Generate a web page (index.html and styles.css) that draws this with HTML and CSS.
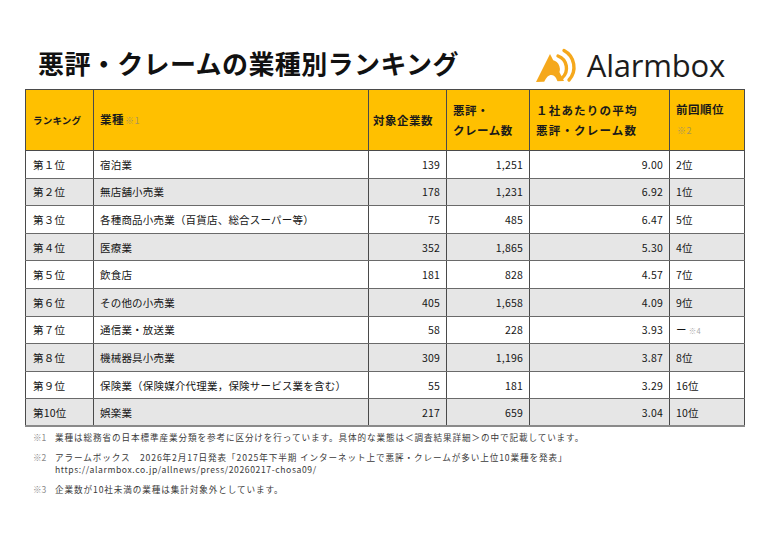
FILE: index.html
```html
<!DOCTYPE html>
<html lang="ja">
<head>
<meta charset="utf-8">
<title>悪評・クレームの業種別ランキング</title>
<link rel="stylesheet" href="styles.css">
</head>
<body>
<div class="page">
  <header class="top">
    <h1 class="title">悪評・クレームの業種別ランキング</h1>
    <div class="logo">
      <svg class="logo-icon" width="44" height="36" viewBox="0 0 44 36" aria-hidden="true">
        <path d="M15 6 L29 33 L1 34 Z" fill="#F5A81C"/>
        <path d="M9 34.5 C12 26 18 25 21 30 L23 34.5 Z" fill="#fff"/>
        <path d="M17 14 A7 7 0 0 1 21 26" fill="none" stroke="#F5A81C" stroke-width="3.4" stroke-linecap="round"/>
        <path d="M23 8 A13 13 0 0 1 27 30" fill="none" stroke="#F5A81C" stroke-width="3.4" stroke-linecap="round"/>
        <path d="M29 2.5 A19 19 0 0 1 34 32" fill="none" stroke="#F5A81C" stroke-width="3.4" stroke-linecap="round"/>
      </svg>
      <span class="logo-text">Alarmbox</span>
    </div>
  </header>

  <table class="rank">
    <colgroup>
      <col class="c-rank"><col class="c-ind"><col class="c-cnt"><col class="c-rev"><col class="c-avg"><col class="c-prev">
    </colgroup>
    <thead>
      <tr>
        <th class="h-rank">ランキング</th>
        <th>業種<span class="note">※1</span></th>
        <th class="h-cnt">対象企業数</th>
        <th>悪評・<br>クレーム数</th>
        <th class="h-avg">１社あたりの平均<br>悪評・クレーム数</th>
        <th>前回順位<br><span class="note">※2</span></th>
      </tr>
    </thead>
    <tbody>
      <tr><td class="rk">第１位</td><td>宿泊業</td><td class="num">139</td><td class="num">1,251</td><td class="num">9.00</td><td>2位</td></tr>
      <tr class="alt"><td class="rk">第２位</td><td>無店舗小売業</td><td class="num">178</td><td class="num">1,231</td><td class="num">6.92</td><td>1位</td></tr>
      <tr><td class="rk">第３位</td><td>各種商品小売業（百貨店、総合スーパー等）</td><td class="num">75</td><td class="num">485</td><td class="num">6.47</td><td>5位</td></tr>
      <tr class="alt"><td class="rk">第４位</td><td>医療業</td><td class="num">352</td><td class="num">1,865</td><td class="num">5.30</td><td>4位</td></tr>
      <tr><td class="rk">第５位</td><td>飲食店</td><td class="num">181</td><td class="num">828</td><td class="num">4.57</td><td>7位</td></tr>
      <tr class="alt"><td class="rk">第６位</td><td>その他の小売業</td><td class="num">405</td><td class="num">1,658</td><td class="num">4.09</td><td>9位</td></tr>
      <tr><td class="rk">第７位</td><td>通信業・放送業</td><td class="num">58</td><td class="num">228</td><td class="num">3.93</td><td>ー<span class="note small">※4</span></td></tr>
      <tr class="alt"><td class="rk">第８位</td><td>機械器具小売業</td><td class="num">309</td><td class="num">1,196</td><td class="num">3.87</td><td>8位</td></tr>
      <tr><td class="rk">第９位</td><td>保険業（保険媒介代理業，保険サービス業を含む）</td><td class="num">55</td><td class="num">181</td><td class="num">3.29</td><td>16位</td></tr>
      <tr class="alt"><td class="rk">第10位</td><td>娯楽業</td><td class="num">217</td><td class="num">659</td><td class="num">3.04</td><td>10位</td></tr>
    </tbody>
  </table>

  <div class="notes">
    <div class="fn"><span class="mk">※1</span><p>業種は総務省の日本標準産業分類を参考に区分けを行っています。具体的な業態は＜調査結果詳細＞の中で記載しています。</p></div>
    <div class="fn"><span class="mk">※2</span><p>アラームボックス　2026年2月17日発表「2025年下半期 インターネット上で悪評・クレームが多い上位10業種を発表」<br><span class="url">https://alarmbox.co.jp/allnews/press/20260217-chosa09/</span></p></div>
    <div class="fn"><span class="mk">※3</span><p>企業数が10社未満の業種は集計対象外としています。</p></div>
  </div>
</div>
</body>
</html>
```

FILE: styles.css
```css
* { box-sizing: border-box; }
html, body { margin: 0; padding: 0; background: #fff; }
body {
  font-family: "Noto Sans CJK JP", "Noto Sans", sans-serif;
  color: #1a1a1a;
}
.page {
  width: 770px;
  padding: 0 0 0 25px;
}
.top {
  height: 89px;
  display: flex;
  align-items: center;
  justify-content: space-between;
  padding: 40px 19px 4px 13px;
  width: 719px;
}
.title {
  margin: 0;
  font-size: 26px;
  font-weight: 700;
  line-height: 1;
  letter-spacing: 0.4px;
  color: #111;
}
.logo {
  display: flex;
  align-items: center;
  gap: 8px;
  margin-top: 6px;
}
.logo-icon { display: block; }
.logo-text {
  font-family: "Open Sans", "Noto Sans", sans-serif;
  font-size: 31px;
  font-weight: 400;
  color: #1c1c1c;
  line-height: 1;
  letter-spacing: -0.2px;
}
.rank {
  border-collapse: collapse;
  table-layout: fixed;
  width: 719px;
  font-size: 10.5px;
}
.c-rank { width: 68px; }
.c-ind { width: 275px; }
.c-cnt { width: 78px; }
.c-rev { width: 83px; }
.c-avg { width: 140px; }
.c-prev { width: 75px; }
.rank th, .rank td {
  border: 1px solid #4a4a4a;
  padding: 0 6px;
  vertical-align: middle;
  text-align: left;
}
.rank th {
  background: #FFC000;
  height: 61px;
  font-size: 11.5px;
  font-weight: 700;
  line-height: 20px;
  letter-spacing: 0.5px;
  color: #1a1a1a;
}
.rank th.h-rank { font-size: 9.5px; padding-left: 7px; letter-spacing: 0.2px; }
.rank th.h-cnt { padding-left: 4px; }
.rank th.h-avg { letter-spacing: 1.2px; }
.note {
  color: #a8955e;
  font-weight: 400;
  font-size: 9px;
  margin-left: 1px;
}
.rank td .note.small { color: #aaa; font-size: 7.5px; margin-left: 2px; }
.rank td {
  height: 27.6px;
  color: #151515;
  border-top-color: #6a6a6a;
  border-bottom-color: #6a6a6a;
  letter-spacing: 0.2px;
}
.rank td.rk { padding-left: 7px; }
.rank td.num { text-align: right; padding-right: 6px; }
.rank tr.alt td { background: #E6E6E6; }
.rank tbody tr:last-child td { border-bottom: 2px solid #8a8a8a; }
.notes {
  padding: 4px 0 0 8px;
  font-size: 8.6px;
  color: #3a3a3a;
  letter-spacing: 0.9px;
}
.fn {
  display: flex;
  margin-bottom: 8px;
}
.fn .mk {
  width: 22px;
  flex: none;
  color: #8a8a8a;
  letter-spacing: 0;
}
.fn p {
  margin: 0;
  line-height: 12px;
}
.fn .url { letter-spacing: 0.6px; }
```
